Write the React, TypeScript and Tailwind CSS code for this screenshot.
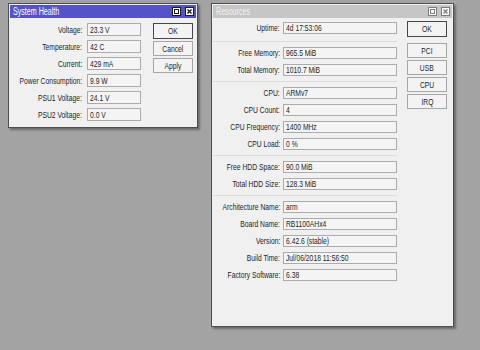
import type { ReactNode } from 'react'

const LABEL = 'inline-block whitespace-nowrap origin-right scale-x-[0.71]'
const VALUE = 'inline-block whitespace-nowrap origin-left scale-x-[0.71]'
const CENTER = 'inline-block whitespace-nowrap origin-center scale-x-[0.71]'

function TitleButtons({ active }: { active: boolean }) {
  const stroke = active ? '#1c1c1c' : '#7c7c7c'
  return (
    <div className="flex items-center gap-[4px]">
      <svg width="9" height="9" viewBox="0 0 9 9">
        <rect x="0.5" y="0.5" width="8" height="8" fill="#fff" stroke={stroke} />
        <rect x="2.5" y="2.5" width="4" height="4" fill="none" stroke={stroke} />
      </svg>
      <svg width="9" height="9" viewBox="0 0 9 9">
        <rect x="0.5" y="0.5" width="8" height="8" fill="#fff" stroke={stroke} />
        <path d="M2.5 2.5 L6.5 6.5 M6.5 2.5 L2.5 6.5" stroke={stroke} strokeWidth="1.4" />
      </svg>
    </div>
  )
}

function Window({
  title,
  active,
  className,
  children,
}: {
  title: string
  active: boolean
  className: string
  children: ReactNode
}) {
  return (
    <div
      className={`absolute flex flex-col border border-[#4e4e4e] bg-[#f0f0f0] p-px shadow-[2px_2px_2px_rgba(0,0,0,0.35)] ${className}`}
    >
      <div
        className={
          active
            ? 'flex h-[13px] items-center justify-between bg-[#5454c8] pl-[3px] pr-[2px] text-white'
            : 'flex h-[13px] items-center justify-between bg-[#c6c6c6] pl-[3px] pr-[2px] text-[#f2f2f2]'
        }
      >
        <span className={`${VALUE} text-[10px] leading-none`}>{title}</span>
        <TitleButtons active={active} />
      </div>
      {children}
    </div>
  )
}

function Button({ label, primary }: { label: string; primary?: boolean }) {
  return (
    <div
      className={
        primary
          ? 'flex h-[16px] w-[40px] items-center justify-center border border-[#474747] bg-[#f3f3f3]'
          : 'flex h-[15px] w-[40px] items-center justify-center border border-[#a6a6a6] bg-[#f3f3f3]'
      }
    >
      <span className={CENTER}>{label}</span>
    </div>
  )
}

const health = [
  ['Voltage:', '23.3 V'],
  ['Temperature:', '42 C'],
  ['Current:', '429 mA'],
  ['Power Consumption:', '9.9 W'],
  ['PSU1 Voltage:', '24.1 V'],
  ['PSU2 Voltage:', '0.0 V'],
]

const resources: [string, string][][] = [
  [['Uptime:', '4d 17:53:06']],
  [
    ['Free Memory:', '965.5 MiB'],
    ['Total Memory:', '1010.7 MiB'],
  ],
  [
    ['CPU:', 'ARMv7'],
    ['CPU Count:', '4'],
    ['CPU Frequency:', '1400 MHz'],
    ['CPU Load:', '0 %'],
  ],
  [
    ['Free HDD Space:', '90.0 MiB'],
    ['Total HDD Size:', '128.3 MiB'],
  ],
  [
    ['Architecture Name:', 'arm'],
    ['Board Name:', 'RB1100AHx4'],
    ['Version:', '6.42.6 (stable)'],
    ['Build Time:', 'Jul/06/2018 11:56:50'],
    ['Factory Software:', '6.38'],
  ],
]

export default function App() {
  return (
    <div
      className="relative h-[350px] w-[480px] overflow-hidden bg-[#a3a3a3] text-[9.5px] leading-none text-[#1e1e1e]"
      style={{ fontFamily: '"Liberation Sans", Arial, sans-serif' }}
    >
      <Window title="System Health" active className="left-[8px] top-[3px] h-[125px] w-[190px]">
        <div className="flex pt-[5px]">
          <div className="flex flex-col gap-[4px]">
            {health.map(([label, value]) => (
              <div key={label} className="flex h-[13px] items-center gap-[5px]">
                <div className="flex w-[72px] justify-end">
                  <span className={LABEL}>{label}</span>
                </div>
                <div className="flex h-[13px] w-[54px] items-center border border-[#ababab] bg-[#f4f4f4] pl-[2px]">
                  <span className={VALUE}>{value}</span>
                </div>
              </div>
            ))}
          </div>
          <div className="ml-[12px] flex flex-col gap-[2px]">
            <Button label="OK" primary />
            <Button label="Cancel" />
            <Button label="Apply" />
          </div>
        </div>
      </Window>

      <Window title="Resources" active={false} className="left-[211px] top-[3px] h-[324px] w-[243px]">
        <div className="flex pt-[4px]">
          <div className="flex flex-col gap-[5px]">
            {resources.map((group, gi) => (
              <div key={gi} className="flex flex-col gap-[5px]">
                {gi > 0 && (
                  <div
                    className={
                      gi === 1
                        ? 'mt-[2px] h-px w-[184px] bg-[#dcdcdc]'
                        : 'h-px w-[184px] bg-[#dcdcdc]'
                    }
                  />
                )}
                {group.map(([label, value]) => (
                  <div key={label} className="flex h-[12px] items-center gap-[3px]">
                    <div className="flex w-[67px] justify-end">
                      <span className={LABEL}>{label}</span>
                    </div>
                    <div className="flex h-[12px] w-[114px] items-center border border-[#ababab] bg-[#f4f4f4] pl-[2px]">
                      <span className={VALUE}>{value}</span>
                    </div>
                  </div>
                ))}
              </div>
            ))}
          </div>
          <div className="ml-[10px] -mt-px flex flex-col gap-[2px]">
            <div className="mb-[4px]">
              <Button label="OK" primary />
            </div>
            <Button label="PCI" />
            <Button label="USB" />
            <Button label="CPU" />
            <Button label="IRQ" />
          </div>
        </div>
      </Window>
    </div>
  )
}
